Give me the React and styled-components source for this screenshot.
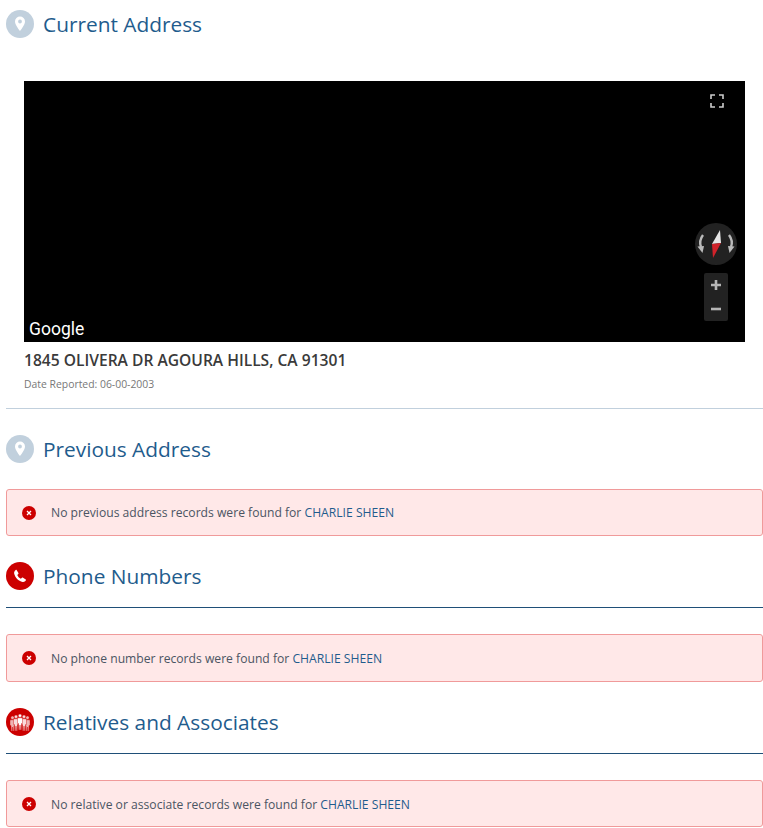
import React from "react";
import styled, { createGlobalStyle } from "styled-components";

const GlobalStyle = createGlobalStyle`
  html, body {
    margin: 0;
    padding: 0;
    background: #fff;
    font-family: "Open Sans", "Liberation Sans", sans-serif;
  }
`;

const Page = styled.div`
  width: 763px;
  height: 828px;
  overflow: hidden;
  padding: 10px 0 0 6px;
  box-sizing: border-box;
`;

const SectionHeader = styled.div`
  display: flex;
  align-items: center;
  gap: 9px;
  height: 28px;
  margin-top: ${(p) => p.$top || 0}px;
`;

const IconCircle = styled.div`
  width: 28px;
  height: 28px;
  border-radius: 50%;
  flex: none;
  display: flex;
  align-items: center;
  justify-content: center;
  background: ${(p) => (p.$active ? "#cc0000" : "#c1d0dd")};
`;

const Title = styled.h2`
  margin: 0;
  font-size: 20.85px;
  font-weight: 400;
  line-height: 28px;
  color: #1f5c8d;
`;

const MapBox = styled.div`
  position: relative;
  width: 721px;
  height: 261px;
  margin: 43px 0 0 18px;
  background: #000;
`;

const FullscreenButton = styled.svg`
  position: absolute;
  top: 13px;
  right: 21px;
`;

const Compass = styled.svg`
  position: absolute;
  top: 142px;
  right: 8px;
`;

const ZoomControl = styled.div`
  position: absolute;
  top: 192px;
  right: 17px;
  width: 24px;
  height: 48px;
  border-radius: 2px;
  background: #222;
  display: flex;
  flex-direction: column;
  align-items: center;
  justify-content: space-around;
`;

const MapLogo = styled.span`
  position: absolute;
  left: 5px;
  bottom: 2px;
  font-family: "Roboto", "Open Sans", sans-serif;
  font-size: 17.5px;
  font-weight: 400;
  line-height: 22px;
  color: #fff;
`;

const AddressBlock = styled.div`
  padding-left: 18px;
`;

const AddressLine = styled.div`
  margin-top: 7px;
  font-size: 15.6px;
  font-weight: 600;
  line-height: 22px;
  color: #3a3a3a;
`;

const DateLine = styled.div`
  margin-top: 6px;
  font-size: 10.4px;
  line-height: 14px;
  color: #777;
`;

const Rule = styled.hr`
  margin: ${(p) => p.$top || 0}px 0 0;
  border: 0;
  height: 1px;
  background: ${(p) => p.$color};
`;

const Alert = styled.div`
  display: flex;
  align-items: center;
  gap: 15px;
  box-sizing: border-box;
  height: ${(p) => p.$h || 47}px;
  margin-top: ${(p) => p.$top}px;
  padding: ${(p) => p.$nudge || 0}px 0 0 15px;
  background: #ffe8e8;
  border: 1px solid #f09a9a;
  border-radius: 3px;
  font-size: 12.15px;
  color: #4b5563;
`;

const PersonName = styled.span`
  color: #1f5c8d;
`;

const PinIcon = () => (
  <svg width="12" height="16" viewBox="0 0 12 16">
    <path
      fillRule="evenodd"
      fill="#fff"
      d="M6 0.5a5 5 0 0 0-5 5c0 3.4 5 9.500 5 9.500s5-6.100 5-9.500a5 5 0 0 0-5-5zM6 3.600a1.900 1.900 0 1 1 0 3.800a1.900 1.900 0 0 1 0-3.800z"
    />
  </svg>
);

const PhoneIcon = () => (
  <svg width="14" height="14" viewBox="0 0 18 18">
    <path
      fill="#fff"
      d="M4.600 1.200 7 5.200c.2.400.1.800-.2 1.100L5.500 7.600c.8 2 2.400 3.700 4.600 4.800l1.400-1.300c.3-.3.700-.3 1-.1l3.900 2.400c.4.300.5.800.2 1.200-1 1.500-2.600 2.400-4.200 2-5.600-1.300-9.600-5.400-10.900-10.800-.4-1.600.4-3.400 2-4.600.4-.3.900-.2 1.100 0z"
    />
  </svg>
);

const Figure = ({ x, y, fill }) => (
  <g transform={`translate(${x} ${y})`} fill={fill} stroke="#cc0000" strokeWidth="0.4">
    <circle cx="2.500" cy="1.700" r="1.700" />
    <path d="M1 3.800h3c.6 0 1 .4 1 1V9.500H4L3.700 16H2.800L2.500 11 2.200 16H1.300L1 9.500H0V4.800c0-.6.4-1 1-1z" />
  </g>
);

const PeopleIcon = () => (
  <svg width="20" height="18" viewBox="0 0 20 18">
    <Figure x={0} y={3} fill="#eeb4b4" />
    <Figure x={15} y={3} fill="#eeb4b4" />
    <Figure x={3.500} y={2} fill="#f9dcdc" />
    <Figure x={11.500} y={2} fill="#f9dcdc" />
    <Figure x={7.500} y={1} fill="#fff" />
  </svg>
);

const ErrorIcon = () => (
  <svg width="14" height="14" viewBox="0 0 14 14" style={{ flex: "none" }}>
    <circle cx="7" cy="7" r="7" fill="#cc0000" />
    <path d="M5 5l4 4M9 5l-4 4" stroke="#fff" strokeWidth="1.300" />
  </svg>
);

const Section = ({ icon, title, active, top }) => (
  <SectionHeader $top={top}>
    <IconCircle $active={active}>{icon}</IconCircle>
    <Title>{title}</Title>
  </SectionHeader>
);

const NoRecords = ({ text, top, h, nudge }) => (
  <Alert $top={top} $h={h} $nudge={nudge}>
    <ErrorIcon />
    <span>
      {text} <PersonName>CHARLIE SHEEN</PersonName>
    </span>
  </Alert>
);

export default function App() {
  return (
    <Page>
      <GlobalStyle />
      <Section icon={<PinIcon />} title="Current Address" />
      <MapBox>
        <FullscreenButton width="14" height="14" viewBox="0 0 14 14" fill="none" stroke="#ccc" strokeWidth="1.600">
          <path d="M1 5V1h4M9 1h4v4M13 9v4H9M5 13H1V9" />
        </FullscreenButton>
        <Compass width="42" height="42" viewBox="0 0 42 42">
          <circle cx="21" cy="21" r="21" fill="#222" />
          <path d="M8 12c-3 4-3.500 8-2 12" fill="none" stroke="#bbb" strokeWidth="2.400" />
          <path d="M2.500 23.500l6.500 -.5-1.500 7z" fill="#bbb" />
          <path d="M34 12c3 4 3.500 8 2 12" fill="none" stroke="#bbb" strokeWidth="2.400" />
          <path d="M39.500 23.500l-6.500 -.5 1.500 7z" fill="#bbb" />
          <path d="M25 7 17 21l9-1z" fill="#e6e6e6" />
          <path d="M17 21l9-1-8 15z" fill="#d0222a" />
        </Compass>
        <ZoomControl>
          <svg width="10" height="10" viewBox="0 0 10 10">
            <path d="M5 0v10M0 5h10" stroke="#b5b5b5" strokeWidth="2.600" />
          </svg>
          <svg width="10" height="10" viewBox="0 0 10 10">
            <path d="M0 5h10" stroke="#b5b5b5" strokeWidth="2.600" />
          </svg>
        </ZoomControl>
        <MapLogo>Google</MapLogo>
      </MapBox>
      <AddressBlock>
        <AddressLine>1845 OLIVERA DR AGOURA HILLS, CA 91301</AddressLine>
        <DateLine>Date Reported: 06-00-2003</DateLine>
      </AddressBlock>
      <Rule $top={17} $color="#c1d0dd" />
      <Section icon={<PinIcon />} title="Previous Address" top={26} />
      <NoRecords text="No previous address records were found for" top={26} />
      <Section icon={<PhoneIcon />} title="Phone Numbers" active top={26} />
      <Rule $top={17} $color="#1f4f78" />
      <NoRecords text="No phone number records were found for" top={26} h={48} />
      <Section icon={<PeopleIcon />} title="Relatives and Associates" active top={26} />
      <Rule $top={17} $color="#1f4f78" />
      <NoRecords text="No relative or associate records were found for" top={26} nudge={1} />
    </Page>
  );
}
